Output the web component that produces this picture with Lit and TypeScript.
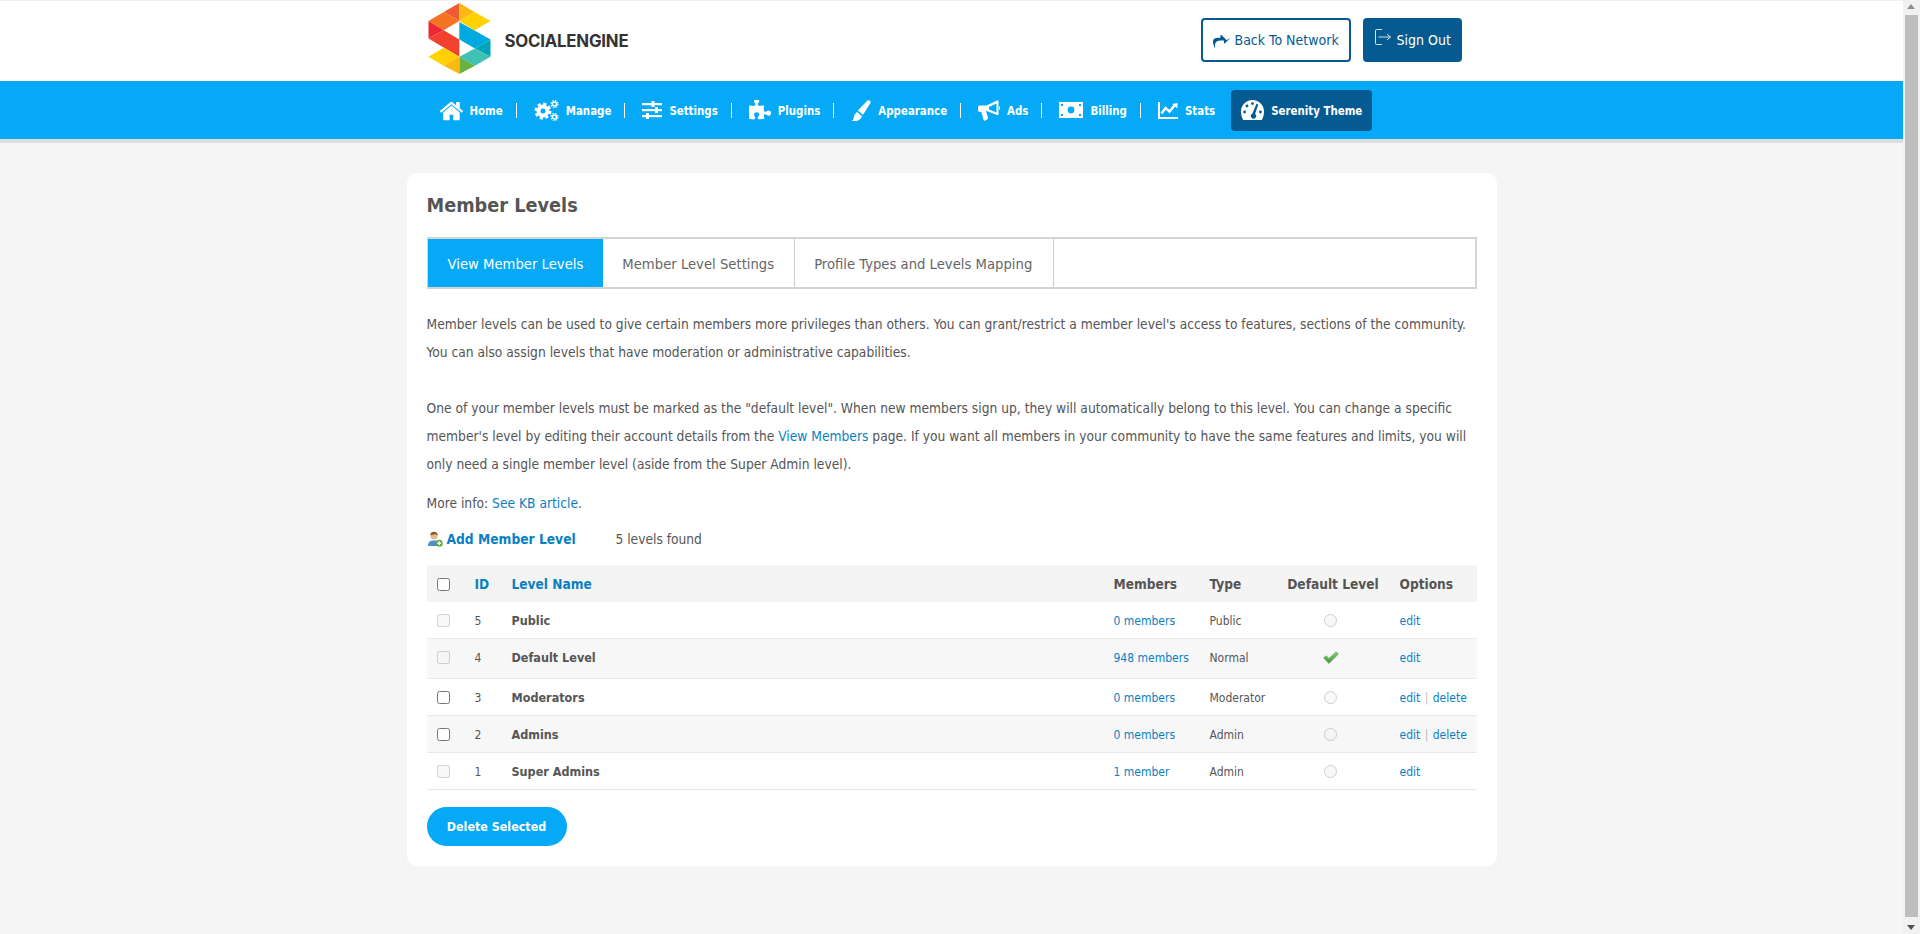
import { LitElement, html, css, svg } from "lit";
import { customElement } from "lit/decorators.js";

const icons: Record<string, any> = {
  home: html`<svg class="ico" style="width:23px;height:21px" viewBox="100 130 1600 1450"><path fill="#fff" d="M1472 992v480q0 26-19 45t-45 19h-384v-384H768v384H384q-26 0-45-19t-19-45V992q0-1 .5-3t.5-3l575-474 575 474q1 2 1 6zm223-69l-62 74q-8 9-21 11h-3q-13 0-21-7L896 424l-692 577q-12 8-24 7-13-2-21-11l-62-74q-8-10-7-23.500t11-21.500l719-599q32-26 76-26t76 26l244 204V288q0-14 9-23t23-9h192q14 0 23 9t9 23v408l219 182q10 8 11 21.500t-7 23.500z"/></svg>`,
  gears: html`<svg class="ico" style="width:25px;height:21px" viewBox="0 0 25 21"><g fill="none" stroke="#fff"><circle cx="9" cy="11" r="4.500" stroke-width="4"/><circle cx="9" cy="11" r="7.200" stroke-width="2.600" stroke-dasharray="3.200 2.450"/><circle cx="20.500" cy="4" r="2" stroke-width="1.500"/><circle cx="20.500" cy="4" r="3.400" stroke-width="1.200" stroke-dasharray="1.600 1.070"/><circle cx="20.500" cy="17" r="2" stroke-width="1.500"/><circle cx="20.500" cy="17" r="3.400" stroke-width="1.200" stroke-dasharray="1.600 1.070"/></g></svg>`,
  sliders: html`<svg class="ico" style="width:20px;height:18px" viewBox="0 0 20 18" fill="#fff"><rect y="2" width="20" height="2.200"/><rect x="9.500" y="0" width="3" height="6"/><rect y="8" width="20" height="2.200"/><rect x="13" y="6.100" width="3" height="6"/><rect y="14" width="20" height="2.200"/><rect x="4" y="12.100" width="3" height="6"/></svg>`,
  puzzle: html`<svg class="ico" style="width:22px;height:21px" viewBox="0 128 1664 1536"><path fill="#fff" d="M1664 1098q0 81-44.500 135t-123.500 54q-41 0-77.500-17.500t-59-38-56.500-38-71-17.500q-110 0-110 124 0 39 16 115t15 115v5q-22 0-33 1-34 3-97.500 11.500t-115.500 13.500-98 5q-61 0-103-26.500t-42-83.500q0-37 17.500-71t38-56.500 38-59 17.500-77.500q0-79-54-123.500t-135-44.500q-84 0-143 45.500t-59 127.500q0 43 15 83t33.500 64.500 33.500 53 15 50.500q0 45-46 89-37 35-117 35-95 0-245-24-9-2-27.500-4t-27.500-4l-13-2q-1 0-3-1-2 0-2-1v-1024q2 1 17.500 3.500t34 5 21.500 3.500q150 24 245 24 80 0 117-35 46-44 46-89 0-22-15-50.500t-33.500-53-33.500-64.500-15-83q0-82 59-127.500t144-45.500q80 0 134 44.500t54 123.500q0 41-17.500 77.500t-38 59-38 56.500-17.500 71q0 57 42 83.500t103 26.500q64 0 180-15t163-17v2q-1 2-3.500 17.500t-5 34-3.500 21.500q-24 150-24 245 0 80 35 117 44 46 89 46 22 0 50.500-15t53-33.500 64.500-33.500 83-15q82 0 127.500 59t45.500 143z"/></svg>`,
  brush: html`<svg class="ico" style="width:20px;height:21px" viewBox="0 0 20 21" fill="#fff"><path d="M16.500.6c1.700-1.200 3.900.6 2.800 2.600l-7.200 11.600-5.300-4.300z"/><path d="M6 12l4.800 3.900c-.7 3.600-4 5.600-10 5 2-1.100 1.800-2.800 2.200-4.300.5-1.800 1.300-3.600 3-4.600z"/></svg>`,
  horn: html`<svg class="ico" style="width:22px;height:21px" viewBox="0 0 22 21"><path fill="#fff" fill-rule="evenodd" d="M2 5.500h6.500L19 .5h1.500V15H19L8.500 11H8l2 6.500c.2.800-.3 1.500-1 2l-2 1.200c-.8.200-1.200-.2-1.500-1L3.300 12H2a2 2 0 0 1-2-2V7.500a2 2 0 0 1 2-2zM18.500 3.500l-7.500 3.600v2.300l7.500 3z"/><path fill="#fff" d="M21 6c1.300.5 1.300 3.500 0 4z"/></svg>`,
  money: html`<svg class="ico" style="width:24px;height:16px" viewBox="0 0 24 16"><rect width="24" height="16" fill="#fff"/><g fill="#05a9f6"><circle cx="12" cy="8" r="3.400"/><rect x="2" y="2" width="2" height="2"/><rect x="20" y="2" width="2" height="2"/><rect x="2" y="12" width="2" height="2"/><rect x="20" y="12" width="2" height="2"/></g></svg>`,
  chart: html`<svg class="ico" style="width:20px;height:17px" viewBox="0 0 20 17"><path fill="#fff" d="M0 0h2v15h18v2H0z"/><path fill="none" stroke="#fff" stroke-width="2.400" d="M3.500 11.500 7.500 6l4 3.500 5-6"/><path fill="#fff" d="M14 2l5.500-1v5.500z"/></svg>`,
  gauge: html`<svg class="ico" style="width:23px;height:20px" viewBox="0 0 23 20"><path fill="#fff" d="M11.500 0C5 0 0 5.200 0 11.500c0 3.200.8 6 2.200 8.500h18.600c1.400-2.500 2.200-5.300 2.200-8.500C23 5.200 18 0 11.500 0z"/><g fill="#055b91"><circle cx="3.600" cy="12" r="1.400"/><circle cx="6" cy="6" r="1.400"/><circle cx="11.500" cy="3.600" r="1.400"/><circle cx="19.400" cy="12" r="1.400"/><path d="M15.500 3.800l1.800.6-3.200 9.600a2.600 2.600 0 1 1-2.800-.3z"/></g></svg>`,
  share: html`<svg class="ico" style="width:17px;height:15px" viewBox="0 256 1792 1280"><path fill="#055b91" d="M1792 640q0 26-19 45l-512 512q-19 19-45 19t-45-19-19-45V896H928q-98 0-175.500 6t-154 21.500-133 42.500-105.500 69.500-80 101-48.500 138.500-17.500 181q0 55 5 123 0 6 2.500 23.500t2.500 26.500q0 15-8.500 25t-23.500 10q-16 0-28-17-7-9-13-22t-13.500-30-10.500-24Q0 1156 0 1056q0-120 32-201 98-244 529-244h224V355q0-26 19-45t45-19 45 19l512 512q19 19 19 45z"/></svg>`,
  signout: html`<svg class="ico up" style="width:16px;height:16px" viewBox="0 0 16 16" fill="none" stroke="#d5e3ed" stroke-width="1"><path d="M7 .5H1.500a1 1 0 0 0-1 1v13a1 1 0 0 0 1 1H7"/><path d="M3.500 8h12M12 5l3.500 3-3.500 3"/></svg>`,
};

const logo = svg`<svg class="logo" viewBox="26 8 187 214" width="63" height="71">
  <polygon fill="#f15a32" points="119,8 72,35 119,62"/>
  <polygon fill="#f47422" points="72,35 26,62 72,90 119,62"/>
  <polygon fill="#ee2737" points="26,62 26,115 72,90"/>
  <polygon fill="#f2412d" points="26,115 72,90 119,118 119,170"/>
  <polygon fill="#fdb813" points="119,8 165,35 119,62"/>
  <polygon fill="#ffd100" points="165,35 213,62 165,90 119,62"/>
  <polygon fill="#00a9e0" points="119,65 213,118 166,145 119,118"/>
  <polygon fill="#00a5b8" points="213,118 213,170 166,145"/>
  <polygon fill="#3fc1b5" points="166,145 213,170 166,197 119,170"/>
  <polygon fill="#6ab23e" points="119,170 166,197 119,222"/>
  <polygon fill="#ffd100" points="72,143 26,170 72,197 119,170"/>
  <polygon fill="#fdb813" points="72,197 119,222 119,170"/>
</svg>`;

const addIcon = html`<svg class="add" viewBox="0 0 16 16" width="16" height="16">
  <path fill="#4f8fd0" d="M1 15c0-4 2-5.500 6-5.500s6 1.500 6 5.500z"/>
  <circle cx="7" cy="5" r="3.500" fill="#e8b98e"/>
  <path fill="#8a5a2b" d="M3.300 4.500C3.300 1.800 5 .8 7 .8s3.700 1 3.700 3.700c-1 0-1.500-1-2.200-1.400-1.500.8-3.500.5-5.200 1.400z"/>
  <circle cx="12.300" cy="12.300" r="3.500" fill="#5aa845"/>
  <path stroke="#fff" stroke-width="1.400" d="M12.300 10.300v4M10.300 12.300h4"/>
</svg>`;

const check = html`<svg class="check" viewBox="0 0 16 13" width="16" height="13">
  <defs><linearGradient id="g" x1="0" y1="0" x2="0" y2="1"><stop offset="0" stop-color="#8fce7a"/><stop offset="1" stop-color="#3c9a3c"/></linearGradient></defs>
  <path fill="url(#g)" stroke="#4f9b4f" stroke-width=".6" d="M.6 7 3 4.800 6 7.500 13 .8 15.400 3 6 12.400z"/>
</svg>`;

interface Row { cb: boolean; id: number; name: string; mem: string; type: string; def?: boolean; del?: boolean; }
const rows: Row[] = [
  { cb: false, id: 5, name: "Public", mem: "0 members", type: "Public" },
  { cb: false, id: 4, name: "Default Level", mem: "948 members", type: "Normal", def: true },
  { cb: true, id: 3, name: "Moderators", mem: "0 members", type: "Moderator", del: true },
  { cb: true, id: 2, name: "Admins", mem: "0 members", type: "Admin", del: true },
  { cb: false, id: 1, name: "Super Admins", mem: "1 member", type: "Admin" },
];

const nav: [string, string][] = [
  ["home", "Home"], ["gears", "Manage"], ["sliders", "Settings"], ["puzzle", "Plugins"],
  ["brush", "Appearance"], ["horn", "Ads"], ["money", "Billing"], ["chart", "Stats"],
];

@customElement("app-root")
export class AppRoot extends LitElement {
  static styles = css`
    :host { display: block; position: relative; width: 1920px; height: 934px; overflow: hidden; background: #f5f5f5; font-family: "DejaVu Sans Condensed", "DejaVu Sans", sans-serif; color: #555; font-size: 13px; }
    .page { width: 1903px; }
    a { color: #0a7fc2; text-decoration: none; }
    .top { height: 80px; background: #fff; border-top: 1px solid #f1f1f1; }
    .wrap { width: 1090px; margin: 0 auto; box-sizing: border-box; }
    .top .wrap { height: 80px; display: flex; align-items: flex-start; padding: 2px 35px 0 21px; }
    .logo { display: block; flex: none; }
    .brand { font-family: Inter, sans-serif; font-weight: 700; font-size: 16.800px; color: #333; margin: 28px 0 0 14px; letter-spacing: -0.2px; }
    .btns { margin: 15px 0 0 auto; display: flex; gap: 12px; align-items: center; }
    .btn { box-sizing: border-box; height: 44px; border-radius: 4px; display: flex; align-items: center; gap: 5px; font-size: 14px; }
    .btn.back { width: 150px; border: 2px solid #055b91; background: #fff; color: #055b91; padding-left: 10px; }
    .btn.out { width: 99px; background: #055b91; color: #fff; padding-left: 12px; gap: 6px; }
    .btn .up { margin-top: -6px; }
    .nav { height: 58px; background: #05a9f6; border-bottom: 4px solid #ddd; }
    .nav .wrap { height: 58px; display: flex; align-items: center; padding-left: 33px; color: #fff; font-size: 11.400px; font-weight: 700; }
    .item { display: flex; align-items: center; gap: 7px; }
    .item span { padding-top: 1px; }
    .ico { display: block; flex: none; }
    .sep { width: 1px; height: 15px; background: #fff; margin: 1px 17px 0 13px; }
    .item.act { background: #055b91; height: 41px; border-radius: 4px; padding: 0 10px; margin-left: 16px; }
    .card { background: #fff; border-radius: 10px; margin-top: 30px; height: 693px; padding: 0 20px; }
    h1 { margin: 0; padding-top: 21px; height: 43px; font-size: 19.700px; line-height: 24px; font-weight: 700; color: #555; }
    .tabs { display: flex; height: 52px; box-sizing: border-box; border: 2px solid #d4d4d4; border-left-width: 1px; }
    .tab { display: flex; align-items: center; padding: 1px 20px 0 19px; font-size: 14.700px; color: #666; border-right: 1px solid #ccc; }
    .tab:last-child { padding-right: 21px; }
    .tab.on { background: #05a9f6; color: #fff; border-right: none; padding-left: 20px; }
    p { margin: 0; line-height: 28px; font-size: 13.700px; }
    .intro { margin-top: 21px; }
    .gap { margin-top: 28px; }
    .more { margin-top: 11px; }
    .adds { display: flex; align-items: center; height: 24px; margin-top: 10px; font-size: 13.650px; }
    .add { flex: none; margin-right: 4px; }
    .adds a { font-weight: 700; font-size: 13.700px; width: 169px; flex: none; }
    table { border-collapse: collapse; table-layout: fixed; width: 1050px; margin-top: 14px; font-size: 12px; }
    th { background: #f4f4f4; height: 37px; text-align: left; font-size: 13.600px; padding: 0; font-weight: 700; color: #555; }
    th.c { padding-top: 2px; height: 35px; }
    th a { font-weight: 700; }
    td { padding: 1px 0 0; height: 35px; border-bottom: 1px solid #e9e9e9; }
    tr.even td { background: #f7f7f7; }
    td.name, td.ctr { padding-top: 0; height: 36px; }
    tr.tall td { height: 37px; padding: 0 0 2px; }
    td.c, th.c { padding-left: 10px; }
    tr.tall td.c { padding-left: 10px; }
    input { margin: 0; display: block; }
    td.name { font-weight: 700; font-size: 12.500px; }
    .ctr { text-align: center; }
    th.ctr { padding-left: 5px; }
    .ctr input, .ctr svg { margin: 0 auto; display: block; }
    th.opt, td.opt, tr.tall td.opt { padding-left: 14px; }
    .bar { color: #bbb; margin: 0 1px; }
    .del { display: block; margin-top: 17px; width: 140px; height: 39px; border: none; border-radius: 20px; background: #05a9f6; color: #fff; font: 700 12.400px "DejaVu Sans Condensed", "DejaVu Sans", sans-serif; padding: 0; }
    .sb { position: absolute; top: 0; right: 0; width: 17px; height: 934px; background: #f1f1f1; }
    .thumb { position: absolute; left: 2px; top: 15px; width: 13px; height: 902px; background: #bdbdbd; }
    .arr { position: absolute; left: 4px; width: 0; height: 0; border-left: 4.500px solid transparent; border-right: 4.500px solid transparent; }
    .arr.u { top: 4px; border-bottom: 5px solid #8f8f8f; }
    .arr.d { bottom: 4px; border-top: 5px solid #505050; }
  `;

  render() {
    return html`
      <div class="page">
        <div class="top"><div class="wrap">
          ${logo}<div class="brand">SOCIALENGINE</div>
          <div class="btns">
            <div class="btn back">${icons.share}<span>Back To Network</span></div>
            <div class="btn out">${icons.signout}<span>Sign Out</span></div>
          </div>
        </div></div>
        <div class="nav"><div class="wrap">
          ${nav.map(([ic, t], i) => html`
            <div class="item">${icons[ic]}<span>${t}</span></div>
            ${i < nav.length - 1 ? html`<div class="sep"></div>` : ""}
          `)}
          <div class="item act">${icons.gauge}<span>Serenity Theme</span></div>
        </div></div>
        <div class="wrap card">
          <h1>Member Levels</h1>
          <div class="tabs">
            <div class="tab on">View Member Levels</div>
            <div class="tab">Member Level Settings</div>
            <div class="tab">Profile Types and Levels Mapping</div>
          </div>
          <p class="intro">Member levels can be used to give certain members more privileges than others. You can grant/restrict a member level's access to features, sections of the community.<br>You can also assign levels that have moderation or administrative capabilities.</p>
          <p class="gap">One of your member levels must be marked as the "default level". When new members sign up, they will automatically belong to this level. You can change a specific member's level by editing their account details from the <a>View Members</a> page. If you want all members in your community to have the same features and limits, you will only need a single member level (aside from the Super Admin level).</p>
          <p class="more">More info: <a>See KB article</a>.</p>
          <div class="adds">${addIcon}<a>Add Member Level</a><span>5 levels found</span></div>
          <table>
            <colgroup><col style="width:48px"><col style="width:37px"><col style="width:602px"><col style="width:96px"><col style="width:66px"><col style="width:110px"><col style="width:91px"></colgroup>
            <thead><tr>
              <th class="c"><input type="checkbox"></th><th><a>ID</a></th><th><a>Level Name</a></th>
              <th>Members</th><th>Type</th><th class="ctr">Default Level</th><th class="opt">Options</th>
            </tr></thead>
            <tbody>
              ${rows.map((r, i) => html`
                <tr class="${i % 2 ? "even" : ""} ${r.def ? "tall" : ""}">
                  <td class="c"><input type="checkbox" ?disabled=${!r.cb}></td>
                  <td>${r.id}</td><td class="name">${r.name}</td>
                  <td><a>${r.mem}</a></td><td>${r.type}</td>
                  <td class="ctr">${r.def ? check : html`<input type="radio" disabled>`}</td>
                  <td class="opt"><a>edit</a>${r.del ? html` <span class="bar">|</span> <a>delete</a>` : ""}</td>
                </tr>`)}
            </tbody>
          </table>
          <button class="del">Delete Selected</button>
        </div>
      </div>
      <div class="sb"><div class="arr u"></div><div class="thumb"></div><div class="arr d"></div></div>
    `;
  }
}
